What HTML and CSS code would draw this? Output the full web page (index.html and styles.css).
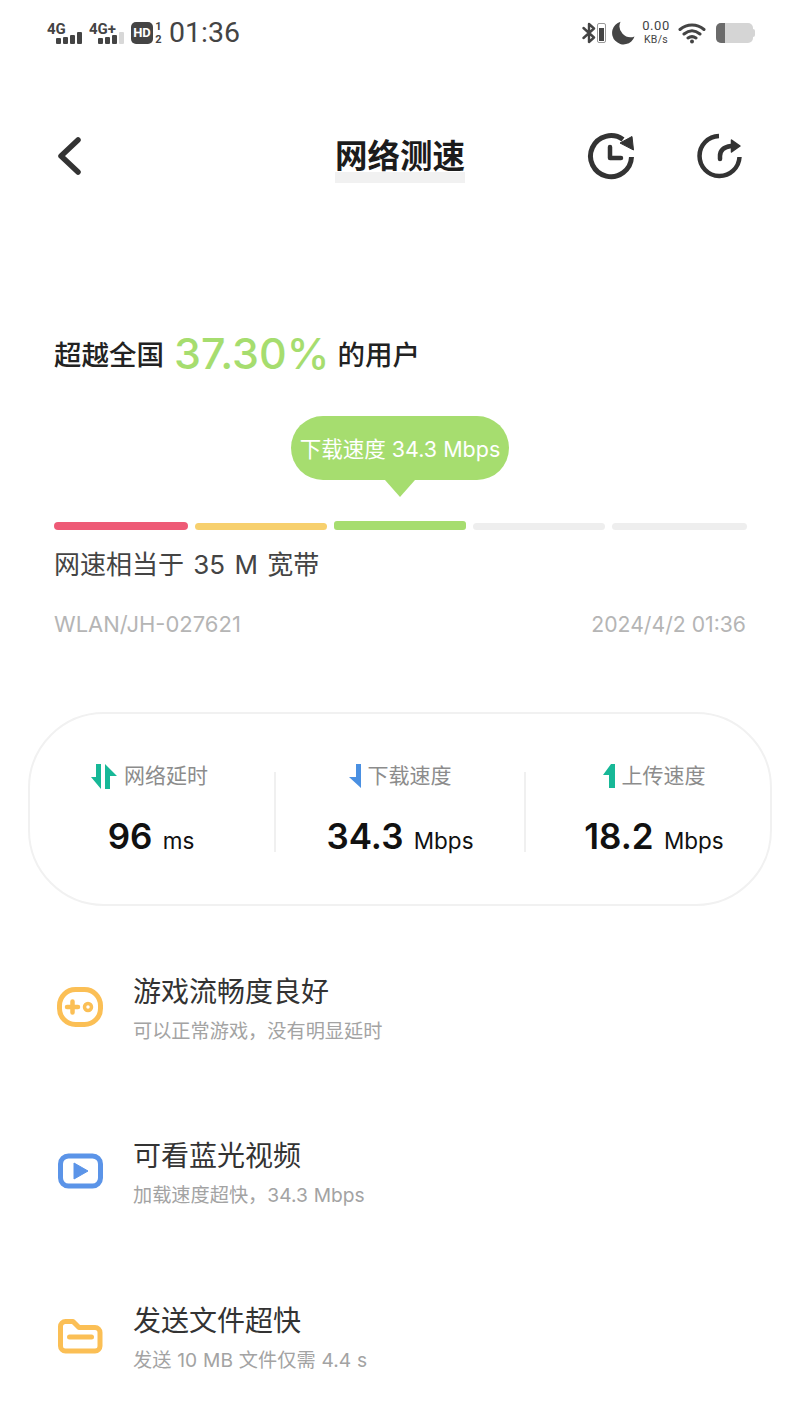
FILE: index.html
```html
<!DOCTYPE html>
<html lang="zh-CN">

<head>
  <meta charset="UTF-8" />
  <meta name="viewport" content="width=device-width, initial-scale=1.0" />
  <title>网络测速</title>
  <link rel="stylesheet" href="styles.css">
</head>

<body>
  <!-- 状态栏 -->
  <div class="status">
    <div class="status-left">
      <div class="sim">
        <span class="sim-name">4G</span>
        <div class="signal"><i class="b1"></i><i class="b2"></i><i class="b3"></i><i class="b4"></i></div>
      </div>
      <div class="sim">
        <span class="sim-name">4G+</span>
        <div class="signal"><i class="b1"></i><i class="b2"></i><i class="b3"></i><i class="b4 off"></i></div>
      </div>
      <span class="hd">HD</span>
      <div class="hd-nums"><span>1</span><span>2</span></div>
      <span class="clock">01:36</span>
    </div>
    <div class="status-right">
      <svg class="bt" viewBox="0 0 14 22" width="14" height="22">
        <path d="M1.5 6 L12 15.5 L7 20 V2 L12 6.5 L1.5 16" fill="none" stroke="#444" stroke-width="2.4" stroke-linejoin="round" stroke-linecap="round" />
      </svg>
      <div class="mini-batt"><i></i></div>
      <svg class="moon" viewBox="0 0 24 24" width="24" height="24">
        <path d="M9.5 0.8 A11.5 11.5 0 1 0 23.5 15.5 A11 11 0 0 1 9.5 0.8 Z" fill="#444" />
      </svg>
      <div class="speed"><span>0.00</span><span>KB/s</span></div>
      <svg class="wifi" viewBox="0 0 28 22" width="28" height="22">
        <path d="M2 7.5 C9 1.5 19 1.5 26 7.5 M6 12 C11 8 17 8 22 12 M10 16 C12.5 14.3 15.5 14.3 18 16" fill="none" stroke="#444" stroke-width="3" stroke-linecap="round" />
        <circle cx="14" cy="19.5" r="2" fill="#444" />
      </svg>
      <div class="battery"><i></i></div>
    </div>
  </div>

  <!-- 标题栏 -->
  <div class="header">
    <svg class="back" viewBox="0 0 26 38" width="26" height="38">
      <path d="M22 3 L5 19 L22 35" fill="none" stroke="#333" stroke-width="5.5" stroke-linecap="round" stroke-linejoin="round" />
    </svg>
    <h1><span>网络测速</span></h1>
    <div class="header-btns">
      <svg viewBox="0 0 48 48" width="48" height="48">
        <path d="M36 7.5 A20.5 20.5 0 1 0 44.5 25" fill="none" stroke="#333" stroke-width="5" />
        <path d="M33 11 L45 4.5 L46.5 18 Z" fill="#333" stroke="#333" stroke-width="1" stroke-linejoin="round" />
        <path d="M23 15 V26 H34" fill="none" stroke="#333" stroke-width="4.5" stroke-linecap="round" stroke-linejoin="round" />
      </svg>
      <svg viewBox="0 0 48 48" width="48" height="48">
        <path d="M23 4 A20 20 0 1 0 43.5 25" fill="none" stroke="#333" stroke-width="4.5" />
        <path d="M24 27 V24 C24 18 28 15 35 14" fill="none" stroke="#333" stroke-width="4.5" stroke-linecap="round" />
        <path d="M35.5 8 L44 14 L35.5 20 Z" fill="#333" stroke="#333" stroke-width="1.5" stroke-linejoin="round" />
      </svg>
    </div>
  </div>

  <!-- 测速结果 -->
  <div class="result">
    <div class="rank"><span>超越全国</span><span class="percent">37.30%</span><span>的用户</span></div>
    <div class="bubble-wrap">
      <div class="bubble">下载速度 34.3 Mbps</div>
    </div>
    <div class="bars">
      <div class="bar red"></div>
      <div class="bar yellow"></div>
      <div class="bar green"></div>
      <div class="bar grey"></div>
      <div class="bar grey wide"></div>
    </div>
    <div class="equal">网速相当于 35 M 宽带</div>
    <div class="meta">
      <span>WLAN/JH-027621</span>
      <span class="meta-time">2024/4/2 01:36</span>
    </div>
  </div>

  <!-- 数据卡片 -->
  <div class="stats">
    <div class="stat first">
      <div class="stat-label">
        <svg viewBox="1 0 26 27" width="26" height="27">
          <path d="M6 1 H11 V26 L1 14 H6 Z" fill="#17b897" />
          <path d="M15 1 V26 H20 V13 H27 Z" fill="#17b897" />
        </svg>
        网络延时
      </div>
      <div class="stat-value"><b>96</b> <span>ms</span></div>
    </div>
    <div class="stat">
      <div class="stat-label">
        <svg viewBox="0 0 12 26" width="12" height="26">
          <path d="M7 1 H12 V25 L0 14 H7 Z" fill="#4a90e2" />
        </svg>
        下载速度
      </div>
      <div class="stat-value"><b>34.3</b> <span>Mbps</span></div>
    </div>
    <div class="stat last">
      <div class="stat-label">
        <svg viewBox="0 0 12 26" width="12" height="26">
          <path d="M12 1 H8 L0 12 H6 V25 H12 Z" fill="#17b897" />
        </svg>
        上传速度
      </div>
      <div class="stat-value"><b>18.2</b> <span>Mbps</span></div>
    </div>
  </div>

  <!-- 列表 -->
  <div class="tips">
    <div class="tip">
      <svg viewBox="0 0 48 40" width="48" height="40">
        <rect x="3.5" y="2.5" width="41" height="35" rx="16" fill="none" stroke="#fbbf55" stroke-width="5" />
        <path d="M11 20 H22 M16.5 14.5 V25.5" stroke="#fbbf55" stroke-width="4.5" stroke-linecap="round" />
        <circle cx="32" cy="20" r="3.5" fill="none" stroke="#fbbf55" stroke-width="3.5" />
      </svg>
      <div>
        <div class="tip-title">游戏流畅度良好</div>
        <div class="tip-sub">可以正常游戏，没有明显延时</div>
      </div>
    </div>
    <div class="tip">
      <svg viewBox="0 0 48 40" width="48" height="40">
        <rect x="4.5" y="5" width="40" height="30" rx="8" fill="none" stroke="#5b94e8" stroke-width="5" />
        <path d="M18 12 L32 20 L18 28 Z" fill="#5b94e8" stroke="#5b94e8" stroke-width="1" stroke-linejoin="round" />
      </svg>
      <div>
        <div class="tip-title">可看蓝光视频</div>
        <div class="tip-sub">加载速度超快，34.3 Mbps</div>
      </div>
    </div>
    <div class="tip">
      <svg viewBox="0 0 48 40" width="48" height="40">
        <path d="M4.5 10.5 A5 5 0 0 1 9.5 5.5 H17 L23 11.5 H39 A5 5 0 0 1 44 16.5 V30 A5 5 0 0 1 39 35 H9.5 A5 5 0 0 1 4.5 30 Z" fill="none" stroke="#fbbf55" stroke-width="5" stroke-linejoin="round" />
        <path d="M13.5 21 H35.5" stroke="#fbbf55" stroke-width="5" stroke-linecap="round" />
      </svg>
      <div>
        <div class="tip-title">发送文件超快</div>
        <div class="tip-sub">发送 10 MB 文件仅需 4.4 s</div>
      </div>
    </div>
  </div>
</body>

</html>
```

FILE: styles.css
```css
* {
  box-sizing: border-box;
}

body {
  margin: 0;
  height: 1422px;
  overflow: hidden;
  background: #fff;
  color: #333;
  font-family: Inter, "Noto Sans CJK SC", sans-serif;
}

/* status bar */
.status {
  display: flex;
  justify-content: space-between;
  align-items: center;
  height: 64px;
  padding: 1px 45px 0 47px;
  color: #444;
  font-family: Roboto, sans-serif;
}

.status-left,
.status-right {
  display: flex;
  align-items: center;
}

.sim {
  display: flex;
  flex-direction: column;
  width: 42px;
  font-size: 15px;
  font-weight: 700;
  line-height: 14px;
}

.signal {
  display: flex;
  gap: 2px;
  align-items: flex-end;
  align-self: flex-end;
  margin-right: 7px;
  margin-top: -4px;
}

.signal i {
  width: 5px;
  background: #444;
  border-radius: 1px;
}

.signal .b1 { height: 6px; }
.signal .b2 { height: 7px; }
.signal .b3 { height: 9px; }
.signal .b4 { height: 12px; }
.signal .off { background: #d8d8d8; }

.hd {
  width: 22px;
  height: 22px;
  background: #444;
  color: #fff;
  border-radius: 5px;
  font-size: 13px;
  font-weight: 700;
  line-height: 22px;
  text-align: center;
}

.hd-nums {
  display: flex;
  flex-direction: column;
  align-items: center;
  width: 9px;
  margin: 0 6px 0 1px;
  font-size: 11px;
  font-weight: 700;
  line-height: 13px;
}

.clock {
  font-size: 28.5px;
}

.mini-batt {
  display: flex;
  align-items: flex-end;
  width: 9px;
  height: 20px;
  margin-left: 1px;
  padding: 1px;
  border: 1px solid #999;
  border-radius: 2px;
}

.mini-batt i {
  width: 100%;
  height: 13px;
  background: #444;
}

.moon {
  margin-left: 5px;
}

.speed {
  display: flex;
  flex-direction: column;
  align-items: center;
  width: 30px;
  margin-left: 6px;
  font-size: 13px;
  letter-spacing: 0.6px;
  line-height: 14px;
}

.speed span:last-child {
  font-size: 10.5px;
  letter-spacing: 0.3px;
}

.wifi {
  margin-left: 7px;
}

.battery {
  position: relative;
  width: 37px;
  height: 20px;
  margin: 0 2px 0 10px;
  background: #d5d5d5;
  border-radius: 5px;
}

.battery i {
  display: block;
  width: 9px;
  height: 100%;
  background: #6b6b6b;
  border-radius: 5px 0 0 5px;
}

.battery::after {
  content: "";
  position: absolute;
  right: -2px;
  top: 6px;
  width: 2px;
  height: 8px;
  background: #d5d5d5;
  border-radius: 0 2px 2px 0;
}

/* header */
.header {
  position: relative;
  display: flex;
  justify-content: space-between;
  align-items: center;
  height: 60px;
  margin-top: 62px;
  padding: 0 56px;
}

.header h1 {
  position: absolute;
  left: 0;
  right: 0;
  top: 1px;
  margin: 0;
  color: #1c1c1c;
  font-size: 32.5px;
  font-weight: 700;
  line-height: 60px;
  text-align: center;
}

.header h1 span {
  position: relative;
  display: inline-block;
}

.header h1 span::after {
  content: "";
  position: absolute;
  left: 0;
  right: 0;
  bottom: 4px;
  height: 11px;
  background: #f1f1f1;
  z-index: -1;
}

.header-btns {
  display: flex;
  gap: 61px;
  position: relative;
}

/* result */
.result {
  padding: 0 53px 0 54px;
}

.rank {
  display: flex;
  align-items: center;
  gap: 10px;
  height: 60px;
  margin-top: 137px;
  color: #222;
  font-size: 27.5px;
  font-weight: 500;
}

.percent {
  margin-right: -2px;
  color: #a6dd6f;
  font-size: 43px;
  font-weight: 500;
}

.bubble-wrap {
  display: flex;
  justify-content: center;
  margin-top: 33px;
}

.bubble {
  position: relative;
  width: 218px;
  height: 64px;
  margin-left: -1px;
  background: #a6dd6f;
  border-radius: 32px;
  color: #fff;
  font-size: 21.5px;
  line-height: 66px;
  text-align: center;
  white-space: nowrap;
}

.bubble::after {
  content: "";
  position: absolute;
  left: 50%;
  top: 64px;
  margin-left: -15px;
  border-left: 15px solid transparent;
  border-right: 15px solid transparent;
  border-top: 17px solid #a6dd6f;
}

.bars {
  display: flex;
  gap: 7px;
  align-items: flex-end;
  height: 9px;
  margin-top: 41px;
}

.bar {
  flex: 0 0 132px;
  height: 7px;
  border-radius: 4px;
}

.red {
  flex: 0 0 134px;
  height: 8px;
  background: #ee5a76;
}

.yellow {
  background: #f7d06e;
}

.green {
  height: 9px;
  background: #a6dd6f;
  border-radius: 3px;
}

.grey {
  background: #eeeeee;
}

.grey.wide {
  flex: 1;
}

.equal {
  margin-top: 16px;
  color: #444;
  font-size: 26px;
  word-spacing: 2px;
  line-height: 38px;
}

.meta {
  display: flex;
  justify-content: space-between;
  align-items: center;
  margin-top: 23px;
  color: #b5b5b5;
  font-size: 22px;
  line-height: 34px;
}

.meta-time {
  font-size: 21.2px;
  margin-right: 1px;
}

/* stats card */
.stats {
  display: grid;
  grid-template-columns: 1fr 250px 1fr;
  height: 194px;
  margin: 71px 28px 0;
  padding-top: 47px;
  border: 2px solid #f1f1f1;
  border-radius: 76px;
}

.stat {
  height: 94px;
  text-align: center;
  position: relative;
}

.stat + .stat::before {
  content: "";
  position: absolute;
  left: -1px;
  top: 11px;
  width: 2px;
  height: 80px;
  background: #f0f0f0;
}

.stat.first {
  padding-right: 6px;
}

.stat.last {
  padding-left: 13px;
}

.stat-label {
  display: flex;
  justify-content: center;
  align-items: center;
  gap: 7px;
  color: #8c8c8c;
  font-size: 21px;
  line-height: 30px;
}

.stat-value {
  margin-top: 20px;
  color: #111;
  font-size: 22.5px;
  line-height: 50px;
}

.stat-value b {
  margin-right: 4px;
  font-size: 35px;
  font-weight: 600;
}

.first .stat-value {
  margin-left: 3px;
}

/* tips */
.tips {
  display: flex;
  flex-direction: column;
  gap: 64.5px;
  margin-top: 52px;
  padding-left: 56px;
}

.tip {
  display: flex;
  align-items: center;
  gap: 29px;
  height: 100px;
}

.tip svg {
  margin-bottom: 3px;
}

.tip-title {
  color: #333;
  font-size: 28px;
  line-height: 42px;
}

.tip-sub {
  margin-top: 3px;
  color: #a3a3a3;
  font-size: 19.2px;
  word-spacing: 0.5px;
  line-height: 30px;
}
```
